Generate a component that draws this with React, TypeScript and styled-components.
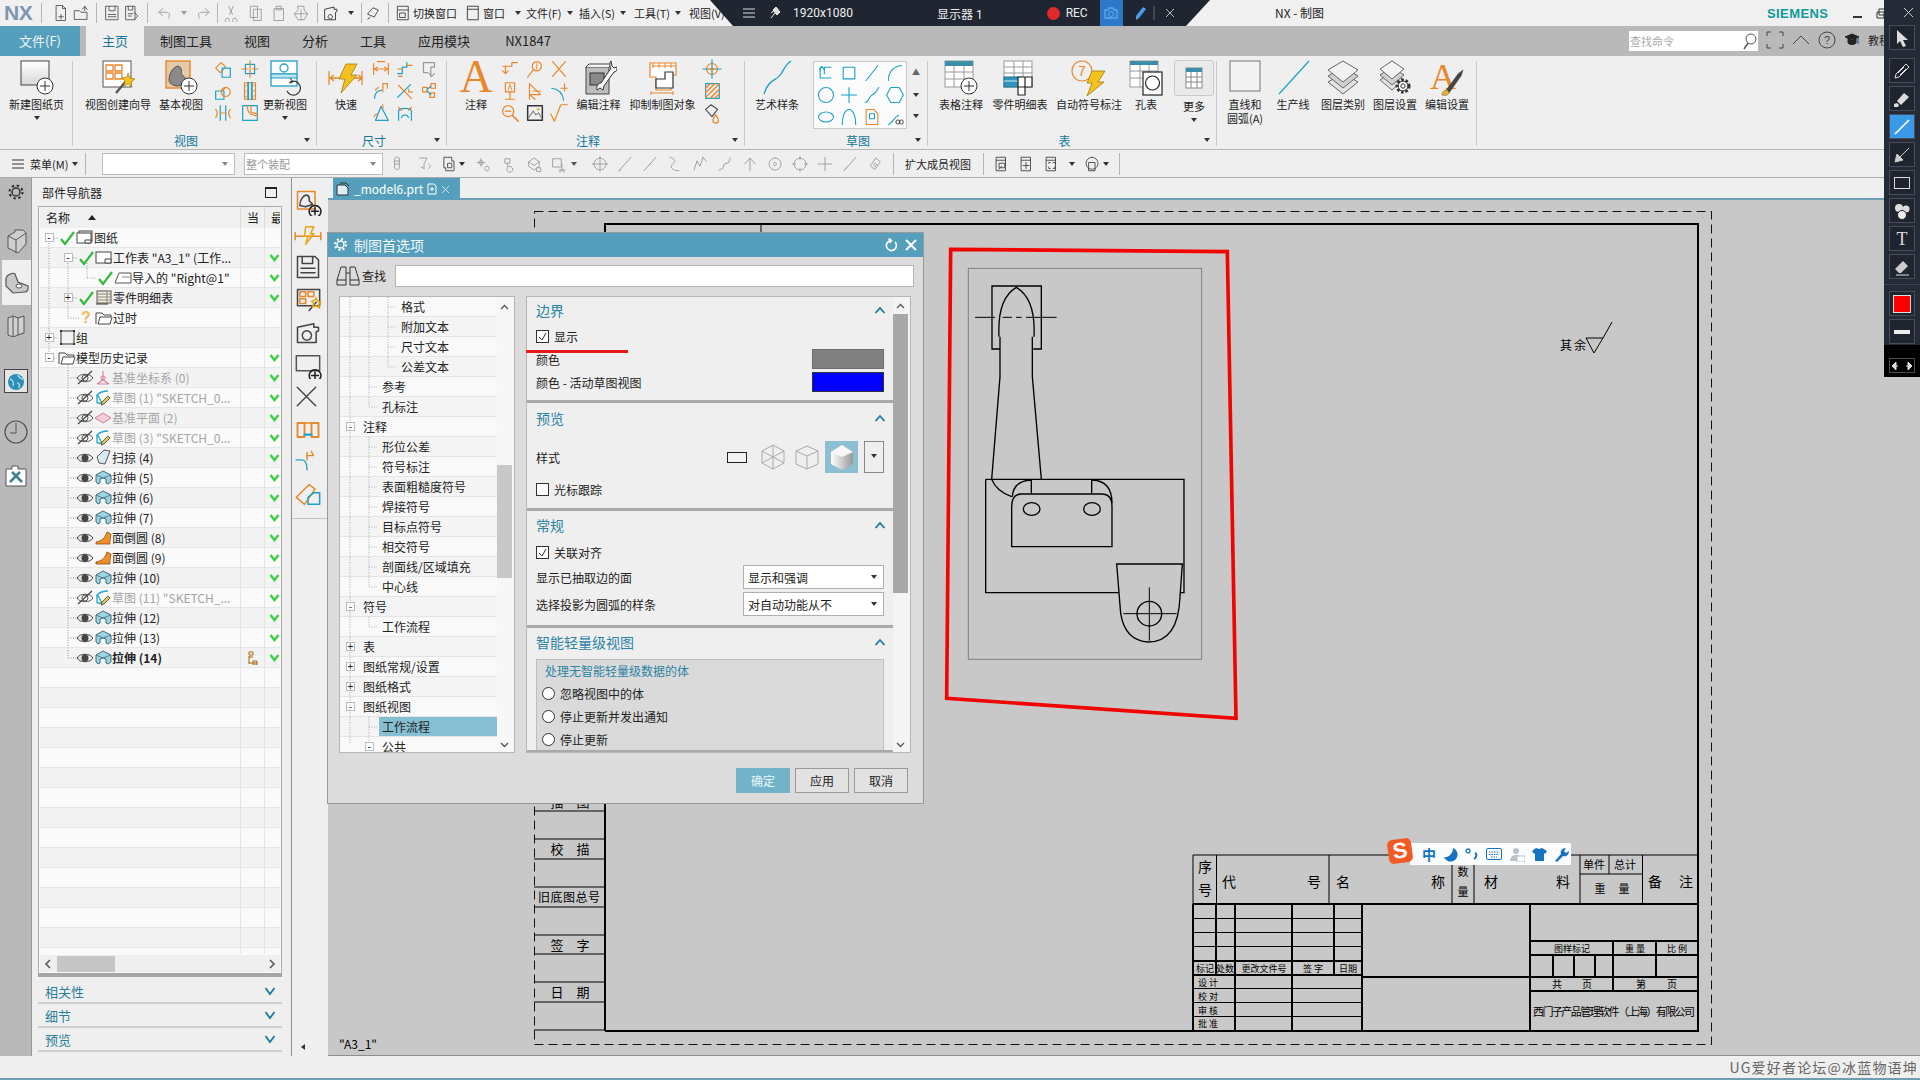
import React from "react";
import styled, { createGlobalStyle } from "styled-components";

const CJK = `"Noto Sans CJK SC", "Liberation Sans", sans-serif`;
const TEAL = "#559fbc";
const O = "#e9872b";
const B = "#1ba1c6";
const K = "#444";
const G = "#9a9a9a";

const Global = createGlobalStyle`
  html, body { margin: 0; padding: 0; width: 1920px; height: 1080px; overflow: hidden; background: #efefef; }
  body { font-family: ${CJK}; color: #222; }
  svg { display: block; }
`;

const Frame = styled.div`position: relative; width: 1920px; height: 1080px; display: flex; flex-direction: column; overflow: hidden;`;

/* generic drawing helpers */
type Part = [string, string, number?];
const Mini = ({ p, s = 22, sw = 1.3 }: { p: Part[]; s?: number; sw?: number }) => (
  <svg width={s} height={s} viewBox="0 0 24 24" fill="none" strokeLinecap="round" strokeLinejoin="round">
    {p.map(([d, c, w], i) => <path key={i} d={d} stroke={c} strokeWidth={w ?? sw} />)}
  </svg>
);

/* title bar */
const TitleBar = styled.div`position: relative; height: 26px; background: #f0f0f0; display: flex; align-items: center; flex: none;`;
const Logo = styled.div`width: 41px; padding-left: 4px; box-sizing: border-box; font: bold 21px/26px "Liberation Sans", sans-serif; color: #7d97b0; letter-spacing: -0.5px;`;
const VSep = styled.div<{ $m: number; $h?: number; $c?: string }>`width: 1px; height: ${p => p.$h ?? 20}px; background: ${p => p.$c ?? "#b5b5b5"}; margin: 0 ${p => p.$m}px; flex: none;`;
const Slot = styled.div<{ $w: number }>`width: ${p => p.$w}px; flex: none; display: flex; justify-content: center; align-items: center;`;
const Caret = styled.i<{ $c?: string }>`display: block; width: 0; height: 0; border-left: 3px solid transparent; border-right: 3px solid transparent; border-top: 4px solid ${p => p.$c ?? "#333"}; flex: none;`;
const QuickText = styled.span<{ $w: number; $ml?: number }>`font-size: 11px; line-height: 26px; width: ${p => p.$w}px; margin-left: ${p => p.$ml ?? 0}px; flex: none; white-space: nowrap; color: #222;`;
const RecBar = styled.div`position: absolute; left: 710px; top: 0; width: 500px; height: 26px; background: #1f2632; clip-path: polygon(0 0, 100% 0, 476px 100%, 23px 100%); display: flex; align-items: center; color: #eee; font: 12px "Roboto", ${CJK};`;
const RecText = styled.span<{ $ml: number }>`margin-left: ${p => p.$ml}px; white-space: nowrap;`;
const RecDot = styled.i`display: block; width: 13px; height: 13px; border-radius: 50%; background: #e02a2a; margin-left: 64px;`;
const RecCam = styled.div`width: 23px; height: 26px; background: #2d79c9; margin-left: 12px; display: flex; align-items: center; justify-content: center;`;
const WinTitle = styled.div`position: absolute; left: 1275px; top: 0; font-size: 12px; line-height: 26px; color: #222;`;
const Siemens = styled.div`position: absolute; left: 1767px; top: 1px; font: bold 13px/26px "Liberation Sans", sans-serif; color: #0d9a9a; letter-spacing: 0.4px;`;
const WinBtns = styled.div`position: absolute; left: 1852px; top: 6px; display: flex; gap: 12px; align-items: center;`;

/* tab bar */
const TabBar = styled.div`height: 30px; background: #b9b9b9; display: flex; align-items: stretch; flex: none; position: relative;`;
const FileTab = styled.div`width: 80px; background: ${TEAL}; color: #eef6fa; font-size: 13px; line-height: 30px; text-align: center; margin-right: 6px;`;
const Tab = styled.div<{ $w: number; $on?: boolean }>`width: ${p => p.$w}px; flex: none; text-align: center; font: 13px/30px ${CJK}; color: ${p => p.$on ? "#14799b" : "#222"}; background: ${p => p.$on ? "#efefef" : "transparent"};`;
const FindBox = styled.div`position: absolute; left: 1629px; top: 5px; width: 129px; height: 20px; background: #fff; font-size: 11px; line-height: 20px; color: #aaa; box-sizing: border-box; padding-left: 1px; display: flex; justify-content: space-between;`;
const TabRight = styled.div`position: absolute; left: 1766px; top: 4px; display: flex; align-items: center; gap: 8px; font-size: 11px;`;

/* ribbon */
const Ribbon = styled.div`height: 93px; background: #efefef; display: flex; flex: none; border-bottom: 1px solid #b5b5b5; box-sizing: content-box;`;
const Group = styled.div<{ $w: number; $sep?: boolean }>`
  position: relative; width: ${p => p.$w}px; flex: none; display: flex; flex-direction: column;
  ${p => p.$sep !== false ? `&::after { content: ""; position: absolute; right: 0; top: 5px; bottom: 3px; width: 1px; background: #c8c8c8; }` : ""}
`;
const GroupBody = styled.div<{ $pl?: number }>`height: 72px; padding: 4px 0 0 ${p => p.$pl ?? 0}px; display: flex; align-items: flex-start; box-sizing: content-box;`;
const GroupFoot = styled.div<{ $pl?: number; $pr?: number }>`height: 16px; display: flex; justify-content: center; align-items: center; padding: 0 ${p => p.$pr ?? 0}px 0 ${p => p.$pl ?? 0}px; font-size: 12px; color: #14799b; position: relative;`;
const FootCaret = styled(Caret)`position: absolute; right: 7px; top: 6px;`;
const Big = styled.div<{ $w: number; $ml?: number }>`width: ${p => p.$w}px; margin-left: ${p => p.$ml ?? 0}px; flex: none; display: flex; flex-direction: column; align-items: center;`;
const BigIcon = styled.div`height: 37px; display: flex; align-items: flex-start; justify-content: center;`;
const BigLabel = styled.div`font-size: 11px; line-height: 14px; text-align: center; white-space: nowrap; color: #222;`;
const MoreLabel = styled(BigLabel)`margin-top: 3px;`;
const BigCaret = styled(Caret)`margin-top: 5px;`;
const BigA = styled.span`display: block; font: 46px/34px "Liberation Serif", serif; color: ${O};`;
const EditA = styled.div`position: relative; width: 36px; height: 36px; font: 36px/34px "Liberation Serif", serif; color: ${O}; text-align: left; padding-left: 1px; box-sizing: border-box;`;
const EditBrush = styled.svg`position: absolute; left: 0; top: 0;`;
const MiniGrid = styled.div<{ $cols: number; $cw: number }>`display: grid; grid-template-columns: repeat(${p => p.$cols}, ${p => p.$cw}px); grid-auto-rows: 22px; flex: none; justify-items: center; align-items: center; margin-top: -2px;`;
const SketchBox = styled.div`display: grid; grid-template-columns: repeat(4, 23px); grid-auto-rows: 22px; background: #fbfbfb; border: 1px solid #c9c9c9; justify-items: center; align-items: center; margin: 1px 0 0 7px;`;
const SketchArrows = styled.div`display: flex; flex-direction: column; align-items: center; justify-content: space-between; width: 18px; height: 50px; margin: 8px 0 0 0; font-size: 8px; color: #666; line-height: 8px;`;
const MoreBox = styled.div`width: 38px; height: 34px; border: 1px solid #c9c9c9; border-radius: 3px; background: #eaeaea; display: flex; align-items: center; justify-content: center;`;

const BigIcons: Record<string, React.ReactNode> = {
  newSheet: <svg width="36" height="36" viewBox="0 0 36 36"><defs><linearGradient id="ns" x1="0" y1="0" x2="0" y2="1"><stop offset="0" stopColor="#fff" /><stop offset="1" stopColor="#d8d8d8" /></linearGradient></defs><rect x="2" y="1" width="28" height="24" fill="url(#ns)" stroke="#444" /><path d="M20 20h10v5H20zM25 20v5" fill="none" stroke="#888" /><circle cx="26" cy="26" r="8" fill="#fff" stroke="#333" /><path d="M21 26h10M26 21v10" stroke="#333" /></svg>,
  wizard: <svg width="36" height="36" viewBox="0 0 36 36"><rect x="3" y="1" width="28" height="26" fill="#fff" stroke="#555" /><path d="M6 5h7v6H6zM15 5h7v6h-7zM6 13h7v6H6zM15 13h7v6h-7z" fill="#fff" stroke={O} strokeWidth="1.3" /><path d="M16 33l11-13" stroke="#555" strokeWidth="2.4" /><path d="M28 13l2 5 5 1-4 3 1 5-4-3-4 2 1-5-3-3 5-1z" fill="#f4c31d" stroke="#a87a10" strokeWidth=".7" /></svg>,
  base: <svg width="36" height="36" viewBox="0 0 36 36"><rect x="3" y="1" width="24" height="27" fill="#e6c9a6" stroke={O} strokeWidth="1.4" /><path d="M6 20c0-7 4-13 9-14 4 1 4 5 3 8 3 2 6 5 6 9l-9 3c-4 0-9-2-9-6z" fill="#8a8a8a" stroke="#444" strokeWidth=".8" /><circle cx="26" cy="26" r="8" fill="#fff" stroke="#333" /><path d="M21 26h10M26 21v10" stroke="#333" /></svg>,
  update: <svg width="36" height="36" viewBox="0 0 36 36"><rect x="4" y="1" width="26" height="25" fill="#fff" stroke={B} strokeWidth="1.3" /><path d="M4 14h26" stroke={B} strokeWidth="1.3" /><path d="M4 14h26v4H4z" fill="#bfe3ee" stroke={B} /><circle cx="17" cy="8" r="4" fill="none" stroke={B} strokeWidth="1.3" /><path d="M23 22a7 7 0 1 1-3 9" fill="none" stroke="#333" strokeWidth="1.2" /><path d="M23 18l3 4-4 1" fill="none" stroke="#333" /></svg>,
  quick: <svg width="36" height="36" viewBox="0 0 36 36"><path d="M1 11v14M34 11v14M2 18h9M25 18h9M2 18l4-3M2 18l4 3M34 18l-4-3M34 18l-4 3" stroke={O} strokeWidth="1.3" fill="none" /><path d="M18 4h11l-6 11h6L13 33l4-14h-6z" fill="#f3c21c" stroke="#a17a10" strokeWidth=".8" /></svg>,
  noteA: <BigA>A</BigA>,
  editNote: <svg width="36" height="36" viewBox="0 0 36 36"><path d="M5 7h23v27H5z" fill="#bdbdbd" stroke="#444" /><path d="M5 7l3-3h23l-3 3" fill="#f4f4f4" stroke="#444" /><rect x="9" y="13" width="14" height="12" fill="#8a8a8a" stroke="#333" /><path d="M30 1c-2 3-1 5 0 7l-10 15c-3 0-5 3-4 7l3-2 3 2 1-4 10-14c3 0 3-3 3-5l-3 1-2-2z" fill="#fafafa" stroke="#333" /></svg>,
  suppress: <svg width="40" height="36" viewBox="0 0 40 36"><path d="M7 3h26v12h-5v15H13V17H7z" fill="#fff" stroke={O} strokeWidth="1.2" /><path d="M10 3v5M16 3v5M22 3v5M28 3v5M9 6h24" stroke={O} /><path d="M13 19h9v-7h8v16H13z" fill="#fff" stroke="#333" strokeWidth="1.2" /><path d="M8 33h22M8 31v4M30 31v4" stroke={O} /></svg>,
  spline: <svg width="36" height="36" viewBox="0 0 36 36"><path d="M5 34C10 18 17 22 22 14c3-5 5-10 10-13" fill="none" stroke={B} strokeWidth="1.4" /></svg>,
  tableNote: <svg width="36" height="36" viewBox="0 0 36 36"><rect x="2" y="1" width="28" height="26" fill="#fff" stroke="#999" /><rect x="2" y="1" width="28" height="5" fill="#3b8ea8" /><path d="M2 12h28M2 19h28M11 6v21M21 6v21" stroke="#999" /><circle cx="26" cy="26" r="8" fill="#fff" stroke="#333" /><path d="M21 26h10M26 21v10" stroke="#333" /></svg>,
  parts: <svg width="36" height="36" viewBox="0 0 36 36"><rect x="2" y="1" width="28" height="26" fill="#fff" stroke="#999" /><path d="M2 7h28M2 13h28M12 1v26M21 1v26" stroke="#999" /><rect x="2" y="17" width="18" height="10" fill="#2f97bd" stroke="#1c6f8f" /><path d="M2 21h18" stroke="#cfeaf3" /><path d="M16 17h14v10h-7v8h-7z" fill="#fff" stroke="#222" strokeWidth="1.2" /><path d="M23 17v10H16" stroke="#222" strokeWidth="1.2" fill="none" /></svg>,
  auto: <svg width="38" height="36" viewBox="0 0 38 36"><circle cx="12" cy="11" r="10" fill="none" stroke={O} strokeWidth="1.2" /><text x="12" y="16" textAnchor="middle" fontFamily="Liberation Sans, sans-serif" fontSize="14" fill={O}>7</text><path d="M22 11h13l-7 11h6L17 36l5-13h-5z" fill="#f3c21c" stroke="#a17a10" strokeWidth=".8" /></svg>,
  holeTable: <svg width="36" height="36" viewBox="0 0 36 36"><rect x="2" y="1" width="28" height="26" fill="#fff" stroke="#999" /><rect x="2" y="1" width="28" height="4" fill="#3b8ea8" /><path d="M2 11h28M2 18h28M12 5v22M21 5v22" stroke="#999" /><rect x="15" y="12" width="19" height="23" fill="#fff" stroke="#222" strokeWidth="1.2" /><circle cx="24.500" cy="23" r="7" fill="none" stroke="#222" strokeWidth="1.2" /></svg>,
  more: <svg width="20" height="22" viewBox="0 0 20 22"><rect x="2" y="1" width="16" height="20" fill="#fff" stroke="#888" /><rect x="2" y="1" width="16" height="4" fill="#3b8ea8" /><path d="M2 10h16M2 15h16M7 5v16M13 5v16" stroke="#888" /></svg>,
  lineArc: <svg width="36" height="36" viewBox="0 0 36 36"><rect x="3" y="1" width="30" height="30" fill="#f3f3f3" stroke="#777" /></svg>,
  prod: <svg width="36" height="36" viewBox="0 0 36 36"><path d="M4 34L34 1" stroke={B} strokeWidth="1.2" /></svg>,
  layers: <svg width="36" height="36" viewBox="0 0 36 36"><g stroke="#666" fill="#e3e3e3"><path d="M18 13l15 9-15 12-15-12z" /><path d="M18 7l15 9-15 12-15-12z" fill="#d0d0d0" /><path d="M18 1l15 9-15 12-15-12z" fill="#f2f2f2" /></g></svg>,
  layerSet: <svg width="36" height="36" viewBox="0 0 36 36"><g stroke="#666" fill="#e3e3e3"><path d="M15 12l12 8-12 10L3 20z" /><path d="M15 7l12 8-12 10L3 15z" fill="#d0d0d0" /><path d="M15 1l12 8-12 10L3 9z" fill="#f2f2f2" /></g><circle cx="26" cy="26" r="6" fill="#fff" stroke="#333" strokeWidth="3" strokeDasharray="2.5 1.8" /><circle cx="26" cy="26" r="5" fill="none" stroke="#333" /><circle cx="26" cy="26" r="2.2" fill="#fff" stroke="#333" /></svg>,
  editSet: <EditA>A<EditBrush width="36" height="36" viewBox="0 0 36 36"><path d="M16 32l13-18 5-4-2 6-12 17z" fill="#444" stroke="#333" strokeWidth=".5" /><path d="M13 35c0-3 2-5 5-5l2 2c0 3-3 4-7 3z" fill="#e0b13c" stroke="#8a6a1c" strokeWidth=".6" /></EditBrush></EditA>,
};

const m: Record<string, Part[]> = {
  proj: [["M4 11l6-6 5 5-6 6z", O], ["M11 11h9v10h-9z", B]],
  boxA: [["M7 7h10v10H7z", B], ["M12 3v18M3 12h6M15 12h6", O]],
  detail: [["M4 12h9v9H4z", B], ["M15 8a5 5 0 1 1-.1 0", O], ["M11 12l3-3", O]],
  hatch: [["M6 3h12v18H6z", O], ["M10 3v18M14 3v18", B, 2], ["M6 8l4-4M6 14l4-4M14 8l4-4M14 14l4-4M6 20l4-4M14 20l4-4", O, 1]],
  hatchBox: [["M5 4h15v16H5z", B], ["M5 9l5-5M5 14l10-10M5 19l15-15M10 20l10-10M15 20l5-5", O, 1.5]],
  brk: [["M9 4v16M15 4v16", B], ["M4 8c3 3 2 6 0 9M20 8c-3 3-2 6 0 9", O], ["M9 12h6", O]],
  sect: [["M4 4h16v16H4z", B], ["M9 4c0 8 4 11 11 11", O], ["M13 4v7l7 2", O]],
  dimH: [["M4 6v12M20 6v12M5 12h14", O], ["M5 12l3-2M5 12l3 2M19 12l-3-2M19 12l-3 2", O], ["M8 4h8", O]],
  stair: [["M4 17h5v-7h5V5", B], ["M14 8h6M9 20h-4", O], ["M4 12h4", O]],
  faded: [["M6 5h12v5h-4v10", G], ["M6 5v11h5", G], ["M12 17l3 3 3-3", G]],
  angle: [["M5 20c0-5 3-9 8-9", B], ["M14 4v9M14 4h5M19 4v5", O], ["M6 11l3-3", O]],
  slash: [["M4 19l14-14", B], ["M5 6l14 14", O], ["M16 10v3h4", O]],
  dots: [["M5 8h5v5H5zM14 4h5v5h-5zM13 14h5v5h-5z", O], ["M10 10l4-3M10 12l4 4", B]],
  tri: [["M6 20h14L12 5z", B], ["M14 7v-4M7 13l-3 3", O]],
  arc: [["M5 20V10c0-4 14-4 14 0v10", B], ["M5 6l3 3M19 6l-3 3", O], ["M8 17c2-4 6-4 8 0", B]],
  flag: [["M4 9h10V5h6", O], ["M7 16v-7", O], ["M7 17l-3-3M7 17l3-3", O]],
  balloon: [["M14 9m-5 0a5 5 0 1 0 10 0 5 5 0 1 0-10 0", O], ["M10 13L4 21", O], ["M14 6v6", O, 1]],
  cross: [["M5 4l14 16M19 4L5 20", O]],
  noteBox: [["M7 3h10v10H7z", O], ["M12 13v8M7 21h10", O], ["M10 11l2-6 2 6", O, 1]],
  triFlag: [["M6 21V4l12 12H6", O], ["M10 12h8", O], ["M6 16l6 5", O]],
  curve: [["M4 9c8 1 12 5 13 13", B], ["M14 9h7M18 4v8", O]],
  mag: [["M10 10m-6 0a6 6 0 1 0 12 0 6 6 0 1 0-12 0", O], ["M15 15l6 6", O, 1.8], ["M7 10h6", O]],
  img: [["M4 4h16v16H4z", "#333", 1.6], ["M5 17l5-7 3 4 3-2 3 5", "#888"], ["M15 8h1", "#e0b13c", 2.5]],
  rough: [["M3 13l4 8 7-18h7", O]],
  target: [["M12 12m-6 0a6 6 0 1 0 12 0 6 6 0 1 0-12 0", O], ["M12 2v20M2 12h20", B], ["M12 9v6M9 12h6", O]],
  fill: [["M5 8l6-5 7 5-6 8z", "#555"], ["M16 14c-2 3-3 4-3 6a3 3 0 0 0 6 0c0-2-1-3-3-6z", O]],
  sk1: [["M5 5v13h13", B], ["M10 13V5h8", B], ["M4 8l3-4 3 4", B]],
  sk2: [["M5 5h14v14H5z", B]],
  sk3: [["M5 21L19 3", B]],
  sk4: [["M4 21c0-10 6-17 16-18", B]],
  sk5: [["M12 12m-9 0a9 9 0 1 0 18 0 9 9 0 1 0-18 0", B]],
  sk6: [["M12 3v18M3 12h18", B]],
  sk7: [["M4 21c4 0 4-7 8-9s6-5 8-9", B]],
  sk8: [["M7 3h10l5 9-5 9H7l-5-9z", B]],
  sk9: [["M3 12a9 6 0 1 0 18 0 9 6 0 1 0-18 0", B]],
  sk10: [["M4 21c0-24 16-24 16 0", B]],
  sk11: [["M5 3h9l5 5v13H5z", O], ["M9 8h6v6H9z", B]],
  sk12: [["M4 21c5-1 6-8 12-11", B], ["M13 18a2.500 2.500 0 1 0 5 0 2.500 2.500 0 1 0-5 0M17 18a2.500 2.500 0 1 0 5 0 2.500 2.500 0 1 0-5 0", "#333", 1]],
};
const Grid = ({ cols, cw, items }: { cols: number; cw: number; items: string[] }) => (
  <MiniGrid $cols={cols} $cw={cw}>{items.map((n, i) => <Mini key={i} p={m[n]} />)}</MiniGrid>
);
const BigBtn = ({ w, ml, icon, label, drop }: { w: number; ml?: number; icon: string; label: React.ReactNode; drop?: boolean }) => (
  <Big $w={w} $ml={ml}><BigIcon>{BigIcons[icon]}</BigIcon><BigLabel>{label}</BigLabel>{drop && <BigCaret />}</Big>
);

/* toolbar row */
const ToolRow = styled.div`height: 27px; background: #efefef; border-bottom: 1px solid #a9a9a9; display: flex; align-items: center; flex: none; font-size: 11px;`;
const Combo = styled.div<{ $w: number; $ml: number }>`width: ${p => p.$w}px; height: 22px; margin-left: ${p => p.$ml}px; box-sizing: border-box; background: #fff; border: 1px solid #bdbdbd; flex: none; display: flex; align-items: center; justify-content: space-between; padding: 0 6px 0 1px; color: #999; font-size: 11px;`;

/* main */
const Main = styled.div`flex: 1; display: flex; min-height: 0;`;
const Rail = styled.div`width: 31px; background: #b9b9b9; border-right: 1px solid #999; display: flex; flex-direction: column; align-items: center; flex: none; position: relative;`;
const RailItem = styled.div<{ $h: number; $on?: boolean; $mt?: number; $pt?: number }>`height: ${p => p.$h}px; margin-top: ${p => p.$mt ?? 0}px; padding-top: ${p => p.$pt ?? 0}px; box-sizing: border-box; width: ${p => p.$on ? "29px" : "31px"}; align-self: flex-end; display: flex; align-items: center; justify-content: center; background: ${p => p.$on ? "#efefef" : "transparent"}; flex: none;`;
const Nav = styled.div`background: #efefef; border-right: 1px solid #8f8f8f; display: flex; flex-direction: column; flex: none; box-sizing: border-box; width: 260px; padding: 0 9px 0 6px;`;
const NavTitle = styled.div`height: 28px; display: flex; align-items: center; justify-content: space-between; padding: 0 5px 0 4px; font-size: 12px; color: #222; flex: none;`;
const MaxBtn = styled.i`display: block; width: 10px; height: 8px; border: 1px solid #222; border-top-width: 2px;`;
const NavBox = styled.div`height: 771px; border: 1px solid #aaa; border-bottom: 4px solid #a6a6a6; background: #fafafa; box-sizing: border-box; display: flex; flex-direction: column; position: relative; flex: none; padding: 0 1px;`;
const NavHead = styled.div`height: 21px; display: flex; font-size: 12px; background: #f0f0f0; flex: none; align-items: center;`;
const NavColName = styled.div`width: 201px; padding-left: 6px; box-sizing: border-box; display: flex; align-items: center; gap: 18px;`;
const NavCol = styled.div<{ $w: number; $pl: number }>`width: ${p => p.$w}px; flex: none; text-align: left; padding-left: ${p => p.$pl}px; box-sizing: border-box; border-left: 1px solid #dcdcdc; line-height: 21px; overflow: hidden; height: 21px; white-space: nowrap;`;
const NavRows = styled.div`height: 726px; overflow: hidden; flex: none;`;
const NavRow = styled.div<{ $odd: boolean }>`height: 20px; box-sizing: border-box; border-bottom: 1px solid #e6e6e6; background: ${p => p.$odd ? "#f3f3f3" : "#fafafa"}; display: flex;`;
const NavName = styled.div<{ $ind: number; $dim?: boolean; $b?: boolean }>`width: 201px; box-sizing: border-box; padding-left: ${p => p.$ind}px; display: flex; align-items: center; font-size: 12px; white-space: nowrap; color: ${p => p.$dim ? "#a5a5a5" : "#222"}; font-weight: ${p => p.$b ? 700 : 400}; overflow: hidden;`;
const NavCell = styled.div<{ $w: number; $pl?: number }>`width: ${p => p.$w}px; flex: none; box-sizing: border-box; padding-left: ${p => p.$pl ?? 0}px; border-left: 1px solid #e4e4e4; display: flex; align-items: center; justify-content: center;`;
const RowSlot = styled.div`width: 18px; height: 19px; flex: none; display: flex; align-items: center; justify-content: center;`;
const Exp = styled.i`display: block; width: 9px; height: 9px; box-sizing: border-box; background: #fff; border: 1px solid #bbb; position: relative; font: normal 10px/7px "Liberation Sans", sans-serif; color: #222; text-align: center;`;
const Qmark = styled.span`font: bold 16px/19px "Liberation Sans", sans-serif; color: #f2bd5c;`;
const NavScroll = styled.div`height: 17px; background: #efefef; display: flex; align-items: center; justify-content: space-between; flex: none; margin-top: 1px;`;
const NavThumbWrap = styled.div`flex: 1; height: 16px;`;
const NavThumb = styled.div`width: 58px; height: 16px; background: #c6c6c6; margin-left: 1px;`;
const ArrowBtn = styled.div`height: 17px; width: 16px; flex: none; display: flex; align-items: center; justify-content: center;`;
const Fold = styled.div<{ $mt?: number }>`height: 22px; margin-top: ${p => p.$mt ?? 0}px; border-bottom: 2px solid #cfcfcf; display: flex; align-items: center; justify-content: space-between; padding: 0 6px 0 7px; font-size: 13px; color: #2b7f9c; flex: none;`;
const Guides = styled.svg`position: absolute; left: 0; top: 0; pointer-events: none;`;

const IconCol = styled.div`width: 36px; background: #efefef; flex: none; display: flex; flex-direction: column; align-items: flex-end; padding: 10px 0 0; box-sizing: border-box; position: relative; overflow: hidden;`;
const ColItem = styled.div`height: 32.500px; width: 34px; display: flex; align-items: flex-start; flex: none;`;
const ColRule = styled.div`height: 1px; background: #c4c4c4; width: 36px; margin-top: 5px; flex: none;`;
const ColArrow = styled.i`position: absolute; left: 9px; bottom: 6px; border-right: 4px solid #333; border-top: 3px solid transparent; border-bottom: 3px solid transparent;`;

const Work = styled.div`flex: 1; display: flex; flex-direction: column; min-width: 0;`;
const DocStrip = styled.div`height: 22px; background: #efefef; border-bottom: 2px solid #6a9fb4; box-sizing: border-box; flex: none; display: flex;`;
const DocTab = styled.div`margin-left: 5px; width: 127px; height: 22px; background: ${TEAL}; color: #fff; font-size: 12px; line-height: 20px; display: flex; align-items: center; gap: 4px; padding-left: 3px; box-sizing: border-box;`;
const Canvas = styled.div`flex: 1; background: #c8c8c8; position: relative; overflow: hidden; border-bottom: 1px solid #8e8e8e;`;
const SheetSvg = styled.svg`position: absolute; left: 0; top: 0;`;
const SText = styled.text`font-family: "Noto Sans CJK SC", sans-serif; fill: #000; text-anchor: middle;`;

const Status = styled.div`height: 24px; background: #efefef; border-bottom: 2px solid #6f9db1; box-sizing: border-box; flex: none; text-align: right; padding-right: 2px; font: 14px/22px "Noto Sans CJK SC", sans-serif; color: #666; letter-spacing: 1.2px;`;

/* pen bar */
const PenBar = styled.div`position: absolute; left: 1884px; top: 0; width: 36px; height: 376px; background: #252b36; display: flex; flex-direction: column; align-items: center;`;
const PenClose = styled.div`height: 25px; width: 100%; display: flex; align-items: center; justify-content: flex-end; padding-right: 6px; box-sizing: border-box; flex: none;`;
const PenBtn = styled.div<{ $on?: boolean; $mt?: number }>`width: 26px; height: 25px; margin-top: ${p => p.$mt ?? 3}px; box-sizing: border-box; border: 1px solid #474d5a; background: ${p => p.$on ? "#3b9ae8" : "#1f242e"}; display: flex; align-items: center; justify-content: center; flex: none;`;
const PenRule = styled.div`width: 100%; height: 1px; background: #3c424e; margin-top: 5px; flex: none;`;
const PenFoot = styled.div`width: 100%; height: 32px; background: #000; margin-top: 1px; flex: none; display: flex; align-items: flex-end; justify-content: center; padding-bottom: 4px; box-sizing: border-box;`;
const PenFootBtn = styled.div`width: 26px; height: 15px; border: 1px solid #4d4d4d; box-sizing: border-box; display: flex; align-items: center; justify-content: center;`;
const Swatch = styled.i`display: block; width: 16px; height: 16px; background: #f00; border: 1px solid #ddd;`;
const PenLine = styled.i`display: block; width: 16px; height: 4px; background: #eee;`;

/* dialog */
const Dialog = styled.div`position: absolute; left: 327px; top: 232px; width: 597px; height: 572px; background: #dcdcdc; border: 1px solid #9a9a9a; box-sizing: border-box; display: flex; flex-direction: column;`;
const DlgHead = styled.div`height: 24px; background: ${TEAL}; color: #f2f8fb; font-size: 14px; line-height: 22px; display: flex; align-items: center; padding: 0 5px 1px 5px; gap: 6px; flex: none; box-sizing: border-box;`;
const DlgTitle = styled.span`flex: 1;`;
const SearchRow = styled.div`height: 39px; display: flex; align-items: flex-start; padding: 8px 0 0 8px; box-sizing: border-box; font-size: 12px; flex: none;`;
const SearchLbl = styled.span`line-height: 22px; margin: 0 9px 0 2px;`;
const SearchInput = styled.div`width: 519px; height: 22px; background: #fff; border: 1px solid #b4b4b4; box-sizing: border-box;`;
const DlgBody = styled.div`height: 457px; display: flex; padding-left: 11px; gap: 11px; flex: none;`;
const TreePane = styled.div`width: 176px; border: 1px solid #b6b6b6; background: #f7f7f7; box-sizing: border-box; display: flex; position: relative; overflow: hidden;`;
const TreeList = styled.div`width: 157px; flex: none; overflow: hidden; height: 455px;`;
const TreeRow = styled.div<{ $odd: boolean; $x: number }>`height: 20px; box-sizing: border-box; border-bottom: 1px solid #e5e5e5; background: ${p => p.$odd ? "#f4f4f4" : "#f9f9f9"}; display: flex; align-items: center; padding-left: ${p => p.$x}px; font-size: 12px; color: #222; white-space: nowrap;`;
const TreeExp = styled(Exp)`margin-right: 8px; flex: none;`;
const TreeLabel = styled.span<{ $sel?: boolean }>`${p => p.$sel ? `flex: 1; background: #86bfd2; margin-left: -3px; padding-left: 3px; line-height: 19px;` : ""}`;
const VScroll = styled.div`flex: 1; display: flex; flex-direction: column; align-items: center; position: relative;`;
const VThumb = styled.div<{ $top: number; $h: number; $c: string }>`position: absolute; left: 0; right: 2px; top: ${p => p.$top}px; height: ${p => p.$h}px; background: ${p => p.$c};`;
const VArrow = styled.div<{ $top: number }>`position: absolute; left: 3px; top: ${p => p.$top}px;`;
const OptPane = styled.div`width: 385px; border: 1px solid #b6b6b6; background: #f4f4f4; box-sizing: border-box; display: flex; overflow: hidden;`;
const OptCol = styled.div`width: 366px; flex: none; display: flex; flex-direction: column; overflow: hidden;`;
const Sec = styled.div<{ $h: number }>`height: ${p => p.$h}px; background: #efefef; border-bottom: 3px solid #a9a9a9; box-sizing: border-box; flex: none; padding: 0 9px; overflow: hidden;`;
const SecHead = styled.div<{ $h: number }>`height: ${p => p.$h}px; display: flex; justify-content: space-between; align-items: center; font-size: 14px; color: #2b84a3; margin: 0 -2px 0 0;`;
const Row = styled.div<{ $h?: number; $mt?: number }>`height: ${p => p.$h ?? 20}px; margin-top: ${p => p.$mt ?? 0}px; display: flex; align-items: center; justify-content: space-between; font-size: 12px; color: #222;`;
const RowLeft = styled.div`display: flex; align-items: center; gap: 5px;`;
const Check = styled.i`display: block; width: 13px; height: 13px; border: 1px solid #333; background: #fff; box-sizing: border-box;`;
const Color = styled.i<{ $c: string; $b: string }>`display: block; width: 72px; height: 20px; box-sizing: border-box; background: ${p => p.$c}; border: 1px solid ${p => p.$b};`;
const Select = styled.div`width: 141px; height: 24px; background: #fff; border: 1px solid #b0b0b0; box-sizing: border-box; display: flex; align-items: center; justify-content: space-between; padding: 0 6px 0 4px; font-size: 12px;`;
const Styles = styled.div`display: flex; align-items: center;`;
const StyleCell = styled.div<{ $w: number; $on?: boolean }>`width: ${p => p.$w}px; height: 32px; background: ${p => p.$on ? "#8bbfd1" : "transparent"}; display: flex; align-items: center; justify-content: center;`;
const StyleDrop = styled.div`width: 20px; height: 32px; margin-left: 6px; border: 1px solid #888; box-sizing: border-box; display: flex; justify-content: center; padding-top: 12px;`;
const GroupBox = styled.div`margin-top: 3px; height: 100px; background: #dadada; border: 1px solid #bdbdbd; box-sizing: border-box; padding: 0 5px;`;
const Legend = styled.div`height: 22px; line-height: 22px; padding-left: 3px; font-size: 12px; color: #2b84a3;`;
const RadioRow = styled.div`height: 23px; display: flex; align-items: center; gap: 5px; font-size: 12px; color: #222;`;
const Radio = styled.i`display: block; width: 13px; height: 13px; border-radius: 50%; border: 1px solid #333; background: #fff; box-sizing: border-box;`;
const DlgFoot = styled.div`display: flex; justify-content: flex-end; gap: 5px; padding: 15px 15px 0 0;`;
const DlgBtn = styled.div<{ $p?: boolean }>`width: 54px; height: 25px; box-sizing: border-box; text-align: center; font-size: 12px; line-height: 23px; background: ${p => p.$p ? "#72b3ca" : "#e2e2e2"}; color: ${p => p.$p ? "#eef7fa" : "#222"}; border: 1px solid ${p => p.$p ? "#72b3ca" : "#9a9a9a"};`;
const RedLine = styled.i`position: absolute; left: 198px; top: 117px; width: 102px; height: 3px; background: #e71a1a; display: block;`;

/* sogou */
const Sogou = styled.div`position: absolute; left: 1386px; top: 839px; width: 185px; height: 26px; display: flex; align-items: center;`;
const SogouBar = styled.div`position: absolute; left: 24px; top: 4px; right: 0; bottom: 0; background: #fbfcfd; display: flex; align-items: center; gap: 7px; padding-left: 12px; box-sizing: border-box; color: #1673c1; font-size: 14px; font-weight: 700;`;
const SogouS = styled.div`position: absolute; left: 2px; top: 0; width: 24px; height: 24px; background: #f15a22; border-radius: 5px; transform: rotate(-8deg); color: #fff; font: bold 22px/24px "Liberation Sans", sans-serif; text-align: center; z-index: 1;`;

const ChevUp = ({ c = "#167a9c" }: { c?: string }) => <svg width="12" height="10" viewBox="0 0 12 10"><path d="M1.500 8L6 3l4.500 5" fill="none" stroke={c} strokeWidth="1.800" /></svg>;
const ChevDown = () => <svg width="12" height="10" viewBox="0 0 12 10"><path d="M1.500 2L6 8l4.500-6" fill="none" stroke="#167a9c" strokeWidth="1.800" /></svg>;
const TinyUp = () => <svg width="9" height="7" viewBox="0 0 9 7"><path d="M1 5l3.500-3.500L8 5" fill="none" stroke="#555" strokeWidth="1.300" /></svg>;
const TinyDown = () => <svg width="9" height="7" viewBox="0 0 9 7"><path d="M1 2l3.500 3.500L8 2" fill="none" stroke="#555" strokeWidth="1.300" /></svg>;

/* navigator icons */
const Eye = () => <svg width="18" height="14" viewBox="0 0 18 14"><path d="M1 7c3-5 13-5 16 0-3 5-13 5-16 0z" fill="#eee" stroke="#444" strokeWidth="1" /><circle cx="9" cy="7" r="3.500" fill="#444" /></svg>;
const EyeOff = () => <svg width="18" height="15" viewBox="0 0 18 15"><path d="M1 8c3-5 13-5 16 0-3 5-13 5-16 0z" fill="none" stroke="#555" strokeWidth="1" /><circle cx="9" cy="8" r="3" fill="none" stroke="#555" /><path d="M2 14L16 1" stroke="#444" strokeWidth="1.200" /></svg>;
const Tick = () => <svg width="17" height="16" viewBox="0 0 17 16"><path d="M2 9l4 5L15 2" fill="none" stroke="#35bb3c" strokeWidth="2.200" /></svg>;
const ColTick = () => <svg width="11" height="9" viewBox="0 0 11 9"><path d="M1.500 2l4 5 4-5" fill="none" stroke="#3ccf48" strokeWidth="2.400" /></svg>;
const SheetI = () => <svg width="18" height="15" viewBox="0 0 18 15"><rect x="1" y="2" width="15" height="11" fill="#fff" stroke="#444" /><path d="M10 9h6v4h-6z" fill="#fff" stroke="#444" /></svg>;
const SheetSt = () => <svg width="18" height="15" viewBox="0 0 18 15"><rect x="3" y="1" width="13" height="10" fill="#eee" stroke="#444" /><rect x="1" y="3" width="14" height="10" fill="#fff" stroke="#444" /><path d="M9 10h6v3H9z" fill="#fff" stroke="#444" /></svg>;
const Iso = () => <svg width="18" height="13" viewBox="0 0 18 13"><path d="M1 12l4-10h12v10z" fill="#fff" stroke="#555" /><path d="M8 6h9" stroke="#888" /></svg>;
const Parts = () => <svg width="18" height="15" viewBox="0 0 18 15"><rect x="2" y="1" width="14" height="12" fill="#f2edd6" stroke="#555" /><path d="M2 4h14M2 7h14M2 10h14M12 1v12" stroke="#888" /><path d="M1 14h12" stroke="#333" /></svg>;
const Folder = () => <svg width="18" height="14" viewBox="0 0 18 14"><path d="M1 13V2h6l2 2h7v2H5L3 13h12l2-7" fill="#fff" stroke="#444" /></svg>;
const Group3 = () => <svg width="17" height="17" viewBox="0 0 17 17"><rect x="2" y="2" width="13" height="13" fill="none" stroke="#333" /><path d="M1 1h2v2H1zM14 1h2v2h-2zM1 14h2v2H1zM14 14h2v2h-2z" fill="#333" /></svg>;
const Csys = () => <svg width="16" height="16" viewBox="0 0 16 16"><path d="M8 1v9M8 10l-6 4M8 10l6 4M3 14l10 0" fill="none" stroke="#d87d96" strokeWidth="1.100" /><circle cx="8" cy="8" r="2" fill="none" stroke="#d87d96" /></svg>;
const Sk = () => <svg width="18" height="18" viewBox="0 0 18 18"><path d="M3 14V6c3-3 7-4 11-4M3 5l5 9h-5" fill="none" stroke="#25a6d0" strokeWidth="1.300" /><path d="M8 13l6-6 2 2-6 6-3 1z" fill="#e6c24f" stroke="#444" strokeWidth=".8" /></svg>;
const Plane = () => <svg width="18" height="12" viewBox="0 0 18 12"><path d="M1 6l8-5 8 5-8 5z" fill="#f6cddb" stroke="#d87d96" /></svg>;
const Sweep = () => <svg width="17" height="17" viewBox="0 0 17 17"><path d="M2 8l7-7 6 1-5 13-6-1z" fill="#d9e9f0" stroke="#555" /></svg>;
const Extrude = () => <svg width="17" height="15" viewBox="0 0 17 15"><path d="M1 5l7-4 8 4v7l-3 2-2-1v-4l-3-1-3 1v4l-2 1-2-2z" fill="#9ed3e4" stroke="#3f6c7c" /><path d="M1 5l7 3 8-3" fill="none" stroke="#3f6c7c" strokeWidth=".8" /></svg>;
const Fillet = () => <svg width="17" height="16" viewBox="0 0 17 16"><path d="M1 12c6-1 9-4 11-10l4 2c-1 6-1 8-1 10l-14 0z" fill="#ef8f2c" stroke="#8a4f10" strokeWidth=".8" /></svg>;
const Assy = () => <svg width="10" height="14" viewBox="0 0 10 14"><path d="M1 1h4v3H1zM1 5v8M1 6h4M1 12h8M5 10h4v4H5z" fill="none" stroke="#a5650f" /></svg>;

type NavItem = { ind: number; slots: React.ReactNode[]; t: string; dim?: boolean; b?: boolean; tick?: boolean; extra?: boolean };
const mk = (ic: React.ReactNode, t: string, opt: Partial<NavItem> = {}): NavItem => ({ ind: 36, slots: [<Eye />, ic], t, tick: true, ...opt });
const mkOff = (ic: React.ReactNode, t: string): NavItem => ({ ind: 36, slots: [<EyeOff />, ic], t, tick: true, dim: true });
const navRows: NavItem[] = [
  { ind: 0, slots: [<Exp>-</Exp>, <Tick />, <SheetSt />], t: "图纸" },
  { ind: 19, slots: [<Exp>-</Exp>, <Tick />, <SheetI />], t: "工作表 \"A3_1\" (工作...", tick: true },
  { ind: 38, slots: [null, <Tick />, <Iso />], t: "导入的 \"Right@1\"", tick: true },
  { ind: 19, slots: [<Exp>+</Exp>, <Tick />, <Parts />], t: "零件明细表", tick: true },
  { ind: 19, slots: [null, <Qmark>?</Qmark>, <Folder />], t: "过时" },
  { ind: 0, slots: [<Exp>+</Exp>, <Group3 />], t: " 组" },
  { ind: 0, slots: [<Exp>-</Exp>, <Folder />], t: " 模型历史记录", tick: true },
  mkOff(<Csys />, "基准坐标系 (0)"),
  mkOff(<Sk />, "草图 (1) \"SKETCH_0..."),
  mkOff(<Plane />, "基准平面 (2)"),
  mkOff(<Sk />, "草图 (3) \"SKETCH_0..."),
  mk(<Sweep />, "扫掠 (4)"),
  mk(<Extrude />, "拉伸 (5)"),
  mk(<Extrude />, "拉伸 (6)"),
  mk(<Extrude />, "拉伸 (7)"),
  mk(<Fillet />, "面倒圆 (8)"),
  mk(<Fillet />, "面倒圆 (9)"),
  mk(<Extrude />, "拉伸 (10)"),
  mkOff(<Sk />, "草图 (11) \"SKETCH_..."),
  mk(<Extrude />, "拉伸 (12)"),
  mk(<Extrude />, "拉伸 (13)"),
  { ...mk(<Extrude />, "拉伸 (14)"), b: true, extra: true },
];

type DItem = { t: string; x: number; exp?: string; sel?: boolean };
const dlgRows: DItem[] = [
  { t: "格式", x: 61 }, { t: "附加文本", x: 61 }, { t: "尺寸文本", x: 61 }, { t: "公差文本", x: 61 },
  { t: "参考", x: 42 }, { t: "孔标注", x: 42 },
  { t: "注释", x: 6, exp: "-" },
  { t: "形位公差", x: 42 }, { t: "符号标注", x: 42 }, { t: "表面粗糙度符号", x: 42 }, { t: "焊接符号", x: 42 }, { t: "目标点符号", x: 42 }, { t: "相交符号", x: 42 }, { t: "剖面线/区域填充", x: 42 }, { t: "中心线", x: 42 },
  { t: "符号", x: 6, exp: "-" }, { t: "工作流程", x: 42 },
  { t: "表", x: 6, exp: "+" }, { t: "图纸常规/设置", x: 6, exp: "+" }, { t: "图纸格式", x: 6, exp: "+" }, { t: "图纸视图", x: 6, exp: "-" },
  { t: "工作流程", x: 42, sel: true },
  { t: "公共", x: 25, exp: "-" },
];

const Icon3 = ({ k }: { k: string }) => {
  const c = "#a9a9a9";
  if (k === "rect") return <svg width="20" height="11"><rect x=".5" y=".5" width="19" height="10" fill="#f2f2f2" stroke="#222" /></svg>;
  if (k === "wire") return <svg width="26" height="28" viewBox="0 0 26 28"><path d="M13 2l11 6v12l-11 6L2 20V8zM2 8l11 6 11-6M13 14v12M2 20l11-6 11 6M13 2v12" fill="none" stroke={c} /></svg>;
  if (k === "hid") return <svg width="26" height="28" viewBox="0 0 26 28"><path d="M13 3l11 5v13l-11 5-11-5V8zM2 8l11 5 11-5M13 13v13" fill="none" stroke={c} /></svg>;
  return <svg width="26" height="28" viewBox="0 0 26 28"><defs><linearGradient id="shd" x1="0" y1="0" x2="1" y2="0"><stop offset="0" stopColor="#fff" /><stop offset="1" stopColor="#999" /></linearGradient></defs><path d="M2 9l11-7 11 7v12l-11 6-11-6z" fill="url(#shd)" /><path d="M2 9l11-7 11 7-11 5z" fill="#f7f7f7" /></svg>;
};

const SheetDrawing = () => {
  const tx = (x: number, y: number, s: string, z = 12) => <SText key={`${x}-${y}-${s}`} x={x} y={y + z * 0.4} fontSize={z}>{s}</SText>;
  const thick = { stroke: "#000", strokeWidth: 2, fill: "none" };
  const thin = { stroke: "#000", strokeWidth: 1, fill: "none" };
  return (
    <SheetSvg width="1592" height="856" viewBox="328 200 1592 856">
      <rect x="534.500" y="211.500" width="1177" height="833" fill="none" stroke="#111" strokeDasharray="9 5" />
      <path d="M605 1031V224H1698V1031H605" {...thick} />
      <path d="M761 224v12" {...thin} />
      {/* left strip */}
      <path d="M534 811h71M534 839h71M534 859h71M534 887h71M534 907h71M534 935h71M534 954h71M534 982h71M534 1002h71M534 1030h71" {...thin} />
      {tx(557, 802, "描", 13)}{tx(583, 802, "图", 13)}
      {tx(557, 849, "校", 13)}{tx(583, 849, "描", 13)}
      {["旧", "底", "图", "总", "号"].map((s, i) => tx(544 + i * 12.500, 897, s, 12))}
      {tx(557, 945, "签", 13)}{tx(583, 945, "字", 13)}
      {tx(557, 992, "日", 13)}{tx(583, 992, "期", 13)}
      <path d="M1193 855H1698M1193 855V904M1216.500 855V904M1329 855V904M1452 855V904M1474 855V904M1580 855V904M1642.500 855V904M1580 874h62.500M1609 855v19" {...thin} />
      {tx(1205, 866, "序", 14)}{tx(1205, 889, "号", 14)}
      {tx(1229, 881, "代", 14)}{tx(1314, 881, "号", 14)}
      {tx(1343, 881, "名", 14)}{tx(1438, 881, "称", 14)}
      {tx(1463, 872, "数", 11)}{tx(1463, 892, "量", 11)}
      {tx(1491, 881, "材", 14)}{tx(1563, 881, "料", 14)}
      {tx(1594, 865, "单件", 11)}{tx(1625, 865, "总计", 11)}
      {tx(1600, 889, "重", 11)}{tx(1624, 889, "量", 11)}
      {tx(1655, 881, "备", 14)}{tx(1686, 881, "注", 14)}
      {/* thick title block */}
      <path d="M1193 904H1698M1193 904V1031M1362 904V1031M1530 904V1031M1698 904V1031M1216 904V975M1235 904V1031M1292 904V1031M1334 904V975" {...thick} />
      <path d="M1193 918.500h169M1193 932.500h169M1193 946.500h169M1193 988.500h169M1193 1002.500h169M1193 1016.500h169" {...thin} />
      <path d="M1193 961h169M1193 975h169M1362 977h168M1530 941h168M1530 955h168M1530 977h168M1530 991h168M1613 941V991M1656 941V977M1553 955v22M1574 955v22M1595 955v22" {...thick} />
      {tx(1205, 968, "标记", 9)}{tx(1225, 968, "处数", 9)}{tx(1264, 968, "更改文件号", 9)}{tx(1313, 968, "签 字", 9)}{tx(1348, 968, "日期", 9)}
      {tx(1208, 982, "设 计", 9)}{tx(1208, 996, "校 对", 9)}{tx(1208, 1010, "审 核", 9)}{tx(1208, 1023, "批 准", 9)}
      {tx(1572, 948, "图样标记", 9)}{tx(1635, 948, "重  量", 9)}{tx(1677, 948, "比  例", 9)}
      {tx(1557, 984, "共", 10)}{tx(1587, 984, "页", 10)}{tx(1641, 984, "第", 10)}{tx(1672, 984, "页", 10)}
      <SText x="1614" y="1016" fontSize="11" textLength="162" lengthAdjust="spacing">西门子产品管理软件（上海）有限公司</SText>
      {/* rough symbol */}
      {tx(1566, 345, "其", 12)}{tx(1580, 345, "余", 12)}
      <path d="M1586 338h17l-9 15zM1603 338l9-16" {...thin} />
      {/* view */}
      <g transform="translate(930 230) scale(.33333)" fill="none" stroke="#000" strokeWidth="4">
        <rect x="115" y="115" width="700" height="1173" stroke="#808080" strokeWidth="3" />
        <path d="M62 58L892 65L918 1465L50 1405Z" stroke="#f00400" strokeWidth="11" />
        <path d="M210 357H186V168H334V357H310" />
        <path d="M207 320C203 240 220 195 259 172C298 195 316 240 312 320" />
        <path d="M210 320V440L185 748M307 320V440L334 748" />
        <path d="M135 262H195M218 262H246M258 262H275M288 262H380" strokeWidth="3" />
        <path d="M167 748H762V1088H750M167 748V1088H566" />
        <path d="M245 950V830Q245 792 275 792H515Q546 792 546 830V950Z" />
        <path d="M247 800Q250 752 305 750M486 750Q546 752 546 820M304 750V790M485 750V790M185 748Q200 785 245 800" />
        <ellipse cx="305" cy="837" rx="25" ry="19" /><ellipse cx="486" cy="837" rx="25" ry="19" />
        <path d="M560 1002H757L750 1100Q745 1235 655 1236Q585 1232 572 1150Z" />
        <circle cx="658" cy="1151" r="37" />
        <path d="M580 1151H740M658 1072V1232" strokeWidth="3" />
      </g>
      <SText x="358" y="1049" fontSize="12">"A3_1"</SText>
    </SheetSvg>
  );
};

export default function App() {
  const q = (d: string, c = "#555") => <Mini p={[[d, c]]} s={18} sw={1.2} />;
  return (
    <Frame>
      <Global />
      <TitleBar>
        <Logo>NX</Logo>
        <VSep $m={0} />
        <Slot $w={9} />
        <Slot $w={20}>{q("M6 2h8l4 4v16H6zM14 2v4h4M9 17h6M12 14v6")}</Slot>
        <Slot $w={20}>{q("M3 20V9h7l2 2h8v9zM14 7l3-4 3 4M17 3v6")}</Slot>
        <VSep $m={5} />
        <Slot $w={20}>{q("M4 3h16v18H4zM8 3v6h8V3M7 14h10M7 17h10")}</Slot>
        <Slot $w={20}>{q("M4 3h12v18H4zM7 3v5h6V3M7 13h6M7 16h4M15 11l5 5-5 5")}</Slot>
        <VSep $m={5} />
        <Slot $w={24}>{q("M9 6L4 11l5 5M4 11h10c4 0 5 4 3 8", G)}</Slot>
        <Slot $w={13}><Caret $c={G} /></Slot>
        <Slot $w={26}>{q("M15 6l5 5-5 5M20 11H10c-4 0-5 4-3 8", G)}</Slot>
        <VSep $m={1} />
        <Slot $w={24}>{q("M9 3l5 11M15 3L10 14M7 19a3 3 0 1 0 .1 0M17 19a3 3 0 1 0 .1 0", G)}</Slot>
        <Slot $w={26}>{q("M5 3h9v15H5zM9 7h10v15H9z", G)}</Slot>
        <Slot $w={20}>{q("M6 6h12v16H6zM9 3h6v5H9z", G)}</Slot>
        <Slot $w={24}>{q("M8 3h8v5l5 5-5 8H8l-5-8 5-5zM4 13h16M12 8v13", G)}</Slot>
        <VSep $m={4} />
        <Slot $w={18}>{q("M4 7l12-3v3h4v3l-2 1v10H4zM11 14a3 3 0 1 0 .1 0", "#333")}</Slot>
        <Slot $w={21}><Caret /></Slot>
        <VSep $m={0} />
        <Slot $w={22}>{q("M5 13l7-8 7 3-5 9zM8 18l-3 2", "#444")}</Slot>
        <VSep $m={4} />
        <Slot $w={20}>{q("M5 3h14v18H5zM5 8h14M8 12h7v6H8z", "#444")}</Slot>
        <QuickText $w={50}>切换窗口</QuickText>
        <Slot $w={20}>{q("M5 3h14v18H5zM5 7h14", "#333")}</Slot>
        <QuickText $w={32}>窗口</QuickText>
        <Caret />
        <Slot $w={5} />
        <QuickText $w={41}>文件(F)</QuickText>
        <Caret />
        <Slot $w={6} />
        <QuickText $w={41}>插入(S)</QuickText>
        <Caret />
        <Slot $w={8} />
        <QuickText $w={41}>工具(T)</QuickText>
        <Caret />
        <Slot $w={8} />
        <QuickText $w={30}>视图(V)</QuickText>
        <WinTitle>NX - 制图</WinTitle>
        <Siemens>SIEMENS</Siemens>
        <WinBtns>
          <svg width="12" height="12"><path d="M1 10h9" stroke="#333" strokeWidth="2" /></svg>
          <svg width="12" height="14"><path d="M3 3h7v6H3zM1 6h7v6H1z" fill="#f0f0f0" stroke="#333" /></svg>
        </WinBtns>
        <RecBar>
          <RecText $ml={32}><svg width="14" height="12"><path d="M1 2h12M1 6h12M1 10h12" stroke="#ddd" /></svg></RecText>
          <RecText $ml={12}><svg width="14" height="16" viewBox="0 0 14 16"><path d="M3 13l4-5M5 5l4 5 3-3-4-5zM3 8l4-3" stroke="#eee" fill="#ddd" /></svg></RecText>
          <RecText $ml={11}>1920x1080</RecText>
          <RecText $ml={84}>显示器 1</RecText>
          <RecDot />
          <RecText $ml={6}>REC</RecText>
          <RecCam><svg width="16" height="14" viewBox="0 0 16 14"><path d="M2 4h3l1-2h4l1 2h3v8H2z" fill="none" stroke="#62a8ec" strokeWidth="1.300" /><circle cx="8" cy="8" r="2.500" fill="none" stroke="#62a8ec" /></svg></RecCam>
          <RecText $ml={10}><svg width="14" height="16" viewBox="0 0 14 16"><path d="M3 11l7-9 3 2-7 9-3 2z" fill="#4a9de8" /></svg></RecText>
          <RecText $ml={6}><svg width="3" height="14"><path d="M1 0v14" stroke="#667" /></svg></RecText>
          <RecText $ml={9}><svg width="10" height="10"><path d="M1 1l8 8M9 1L1 9" stroke="#bbb" /></svg></RecText>
        </RecBar>
      </TitleBar>

      <TabBar>
        <FileTab>文件(F)</FileTab>
        <Tab $w={58} $on>主页</Tab>
        <Tab $w={84}>制图工具</Tab>
        <Tab $w={58}>视图</Tab>
        <Tab $w={58}>分析</Tab>
        <Tab $w={58}>工具</Tab>
        <Tab $w={84}>应用模块</Tab>
        <Tab $w={84}>NX1847</Tab>
        <FindBox>查找命令<svg width="16" height="20" viewBox="0 0 16 20"><circle cx="9" cy="8" r="5" fill="none" stroke="#555" /><path d="M6 12l-4 6" stroke="#555" strokeWidth="1.500" /></svg></FindBox>
        <TabRight>
          <svg width="18" height="18"><path d="M1 5V1h4M13 1h4v4M17 13v4h-4M5 17H1v-4" fill="none" stroke="#444" /></svg>
          <svg width="18" height="18"><path d="M1 13l8-8 8 8" fill="none" stroke="#444" /></svg>
          <svg width="18" height="20" viewBox="0 0 18 20"><circle cx="9" cy="10" r="8" fill="none" stroke="#444" /><text x="9" y="14" textAnchor="middle" fontSize="11" fontFamily="Liberation Sans" fill="#444">?</text></svg>
          <svg width="16" height="14" viewBox="0 0 16 14"><path d="M1 4l7-3 7 3-7 3zM4 6v4c2 2 6 2 8 0V6" fill="#222" stroke="#222" /><path d="M14 4v7" stroke="#14a" /></svg>
          <span>教程</span>
        </TabRight>
      </TabBar>

      <Ribbon>
        <Group $w={73}>
          <GroupBody><BigBtn w={73} icon="newSheet" label="新建图纸页" drop /></GroupBody>
        </Group>
        <Group $w={244}>
          <GroupBody $pl={10}>
            <BigBtn w={70} icon="wizard" label="视图创建向导" />
            <BigBtn w={56} icon="base" label="基本视图" />
            <Grid cols={2} cw={27} items={["proj", "boxA", "detail", "hatch", "brk", "sect"]} />
            <BigBtn w={44} icon="update" label="更新视图" drop />
          </GroupBody>
          <GroupFoot $pr={18}>视图<FootCaret /></GroupFoot>
        </Group>
        <Group $w={130}>
          <GroupBody $pl={6}>
            <BigBtn w={46} icon="quick" label="快速" />
            <Grid cols={3} cw={24} items={["dimH", "stair", "faded", "angle", "slash", "dots", "tri", "arc"]} />
          </GroupBody>
          <GroupFoot $pr={16}>尺寸<FootCaret /></GroupFoot>
        </Group>
        <Group $w={298}>
          <GroupBody $pl={7}>
            <BigBtn w={44} icon="noteA" label="注释" />
            <Grid cols={3} cw={24.5} items={["flag", "balloon", "cross", "noteBox", "triFlag", "curve", "mag", "img", "rough"]} />
            <BigBtn w={54} icon="editNote" label="编辑注释" />
            <BigBtn w={74} icon="suppress" label="抑制制图对象" />
            <Grid cols={1} cw={24} items={["target", "hatchBox", "fill"]} />
          </GroupBody>
          <GroupFoot $pr={16}>注释<FootCaret /></GroupFoot>
        </Group>
        <Group $w={183}>
          <GroupBody $pl={3}>
            <BigBtn w={58} icon="spline" label="艺术样条" />
            <SketchBox>
              {["sk1", "sk2", "sk3", "sk4", "sk5", "sk6", "sk7", "sk8", "sk9", "sk10", "sk11", "sk12"].map(n => <Mini key={n} p={m[n]} s={20} />)}
            </SketchBox>
            <SketchArrows>▲<Caret /><Caret /></SketchArrows>
          </GroupBody>
          <GroupFoot $pl={43}>草图<FootCaret /></GroupFoot>
        </Group>
        <Group $w={289}>
          <GroupBody $pl={4}>
            <BigBtn w={58} icon="tableNote" label="表格注释" />
            <BigBtn w={60} icon="parts" label="零件明细表" />
            <BigBtn w={78} icon="auto" label="自动符号标注" />
            <BigBtn w={36} icon="holeTable" label="孔表" />
            <Big $w={40} $ml={10}><MoreBox>{BigIcons.more}</MoreBox><MoreLabel>更多</MoreLabel><BigCaret /></Big>
          </GroupBody>
          <GroupFoot $pr={16}>表<FootCaret /></GroupFoot>
        </Group>
        <Group $w={260}>
          <GroupBody $pl={3}>
            <BigBtn w={50} icon="lineArc" label={<>直线和<br />圆弧(A)</>} />
            <BigBtn w={46} icon="prod" label="生产线" />
            <BigBtn w={54} icon="layers" label="图层类别" />
            <BigBtn w={50} icon="layerSet" label="图层设置" />
            <BigBtn w={54} icon="editSet" label="编辑设置" />
          </GroupBody>
        </Group>
      </Ribbon>

      <ToolRow>
        <Slot $w={12} />
        <svg width="12" height="10"><path d="M0 1h12M0 5h12M0 9h12" stroke="#333" /></svg>
        <QuickText $w={42} $ml={6}>菜单(M)</QuickText>
        <Caret />
        <VSep $m={7} $h={22} />
        <Combo $w={133} $ml={9}><span /><Caret $c="#888" /></Combo>
        <Combo $w={139} $ml={9}>整个装配<Caret $c="#888" /></Combo>
        {[
          "M9 4a4 4 0 0 1 6 0v14a4 4 0 0 1-6 0zM9 8h6M9 12h6",
          "M6 4h10l-4 8v6M12 18l-4-2M18 12l3 3-3 3",
          "M7 3h10v5h3v13H9v-4H7zM12 11h5v6h-5z",
        ].map((d, i) => <Slot key={i} $w={i === 2 ? 22 : 27}>{q(d, i === 2 ? "#444" : G)}</Slot>)}
        <Caret /><Slot $w={6} />
        {[
          "M8 7a3 3 0 1 0 .1 0M16 15a3 3 0 1 0 .1 0M3 10h10M8 5v10",
          "M7 5h6v6H7zM13 15a4 4 0 1 0 .1 0M10 11v4",
          "M5 9l7-5 7 5v6l-7 5-7-5zM5 9l7 5 7-5M16 17h5v5h-5z",
          "M4 5h11v11H4zM16 20a3 3 0 1 0 .1 0M16 12v8M12 20h8",
        ].map((d, i) => <Slot key={i} $w={25}>{q(d, G)}</Slot>)}
        <Caret $c="#555" /><Slot $w={10} />
        {[
          "M12 4a8 8 0 1 0 .1 0M12 2v20M2 12h20",
          "M4 21L20 3M4 21l2-1",
          "M4 21L20 3M10 14l4-4",
          "M5 3c8 2 8 6 4 9s-2 9 8 9",
          "M4 20l4-12 4 7 4-12 4 5M8 8v1M16 3v1",
          "M4 20l5-2 2-6 6-2 2-6",
          "M12 21V5M5 12l7-8 7 8",
          "M12 4a8 8 0 1 0 .1 0M12 10a2 2 0 1 0 .1 0",
          "M12 4a8 8 0 1 0 .1 0M12 2v4M12 18v4M2 12h4M18 12h4",
          "M12 3v18M3 12h18",
          "M4 21L20 3M8 16l-3 3",
          "M6 14l7-10 6 5-7 10zM12 11a2 2 0 1 0 .1 0",
        ].map((d, i) => <Slot key={i} $w={25}>{q(d, G)}</Slot>)}
        <VSep $m={6} $h={22} />
        <QuickText $w={74} $ml={5}>扩大成员视图</QuickText>
        <VSep $m={4} $h={22} />
        {["M6 3h12v18H6zM6 7h12M10 11h7v6h-7zM9 19l4-4", "M6 3h12v18H6zM6 7h12M12 10v8M8 14h8", "M6 3h12v18H6zM6 7h12M9 11v-1h2M15 10h2v1M9 16v2h2M15 18h2v-2"].map((d, i) => <Slot key={i} $w={25}>{q(d, "#444")}</Slot>)}
        <Slot $w={6} /><Caret /><Slot $w={6} />
        <Slot $w={22}>{q("M12 3a8 8 0 1 0 .1 0M8 10h8v11H8z", "#444")}</Slot>
        <Caret /><Slot $w={10} />
        <VSep $m={0} $h={22} />
      </ToolRow>

      <Main>
        <Rail>
          <RailItem $h={27}><svg width="18" height="18" viewBox="0 0 18 18"><circle cx="9" cy="9" r="4" fill="none" stroke="#333" strokeWidth="1.500" /><circle cx="9" cy="9" r="6.500" fill="none" stroke="#333" strokeWidth="2" strokeDasharray="2.500 2.600" /></svg></RailItem>
          <RailItem $h={55} $pt={16}><svg width="22" height="28" viewBox="0 0 22 28"><path d="M3 9l7-4v-2l8 0 3 3v11l-8 9-10-5z" fill="#cfcfcf" stroke="#555" /><path d="M3 9l8 4 10-7M11 13v13" fill="none" stroke="#555" /></svg></RailItem>
          <RailItem $h={45} $on><svg width="26" height="24" viewBox="0 0 26 24"><path d="M2 15V8c0-4 7-7 9-5l3 8 10 4c1 3-1 6-3 6L9 22z" fill="#c9c9c9" stroke="#555" strokeWidth="1.200" /><ellipse cx="15" cy="15" rx="3" ry="2" fill="#fff" stroke="#555" /></svg></RailItem>
          <RailItem $h={40}><svg width="18" height="24" viewBox="0 0 18 24"><path d="M1 5l5-2 5 2v17l-5 2-5-2zM6 3v21M11 5l6-2v17l-6 2" fill="#cfcfcf" stroke="#555" /></svg></RailItem>
          <RailItem $h={35} $mt={18}><svg width="24" height="24" viewBox="0 0 24 24"><rect x=".5" y=".5" width="23" height="23" fill="#e6e6e6" stroke="#444" /><circle cx="12" cy="13" r="8" fill="#2d8fb5" /><path d="M6 10c3 1 4 4 3 7M14 6c1 3 4 4 5 4M13 14c2 0 3 2 2 5" stroke="#9edcef" fill="none" strokeWidth="1.500" /></svg></RailItem>
          <RailItem $h={68}><svg width="24" height="24" viewBox="0 0 24 24"><circle cx="12" cy="12" r="11" fill="none" stroke="#555" strokeWidth="1.200" /><path d="M12 3v10H6" fill="none" stroke="#555" /></svg></RailItem>
          <RailItem $h={20}><svg width="22" height="22" viewBox="0 0 22 22"><path d="M1 4h6V1h6v3h8v17H1z" fill="#fff" stroke="#555" /><path d="M5 17L15 7M7 7l10 10" stroke="#3e7f90" strokeWidth="2.500" /></svg></RailItem>
        </Rail>

        <Nav>
          <NavTitle>部件导航器<MaxBtn /></NavTitle>
          <NavBox>
            <NavHead>
              <NavColName>名称<svg width="8" height="5"><path d="M0 5l4-5 4 5z" fill="#222" /></svg></NavColName>
              <NavCol $w={24} $pl={6}>当</NavCol>
              <NavCol $w={16} $pl={6}>最</NavCol>
            </NavHead>
            <NavRows>
              {Array.from({ length: 37 }).map((_, i) => {
                const r = navRows[i];
                return (
                  <NavRow key={i} $odd={i % 2 === 1}>
                    <NavName $ind={r?.ind ?? 0} $dim={r?.dim} $b={r?.b}>
                      {r?.slots.map((s, j) => <RowSlot key={j}>{s}</RowSlot>)}
                      {r && <span>{r.t}</span>}
                    </NavName>
                    <NavCell $w={24}>{r?.extra && <Assy />}</NavCell>
                    <NavCell $w={16} $pl={4}>{r?.tick && <ColTick />}</NavCell>
                  </NavRow>
                );
              })}
            </NavRows>
            <NavScroll>
              <ArrowBtn><svg width="8" height="10"><path d="M6 1L2 5l4 4" fill="none" stroke="#555" strokeWidth="1.500" /></svg></ArrowBtn>
              <NavThumbWrap><NavThumb /></NavThumbWrap>
              <ArrowBtn><svg width="8" height="10"><path d="M2 1l4 4-4 4" fill="none" stroke="#555" strokeWidth="1.500" /></svg></ArrowBtn>
            </NavScroll>
            <Guides width="240" height="460">
              <path d="M10 36V126M10 136V146M29 56V86M29 96V111M48 56V71M29 158V451" fill="none" stroke="#999" strokeDasharray="1 1.500" />
              <path d="M15 31h4M34 51h4M48 71h10M34 91h4M29 111h12M15 131h3M15 151h3M29 171h15M29 191h15M29 211h15M29 231h15M29 251h15M29 271h15M29 291h15M29 311h15M29 331h15M29 351h15M29 371h15M29 391h15M29 411h15M29 431h15M29 451h15" fill="none" stroke="#999" strokeDasharray="1 1.500" />
            </Guides>
          </NavBox>
          <Fold $mt={3}>相关性<ChevDown /></Fold>
          <Fold>细节<ChevDown /></Fold>
          <Fold>预览<ChevDown /></Fold>
        </Nav>

        <IconCol>
          {[
            <Mini p={[["M3 3h15v15H3z", O], ["M5 15c0-5 3-9 6-9 3 1 2 3 2 5l3 3-6 2z", K], ["M18 15a5 5 0 1 0 .1 0M15 20h6M18 17v6", "#222"]]} s={28} />,
            <Mini p={[["M1 10v6M23 10v6M2 13h20", O], ["M10 5h7l-3 6h3l-7 9 2-7h-3z", "#e2a814"]]} s={28} />,
            <Mini p={[["M3 3h15l3 3v15H3zM7 3v6h9V3M6 13h12M6 17h12", K]]} s={28} />,
            <Mini p={[["M3 3h19v14H3z", K], ["M5 5h5v4H5zM12 5h5v4h-5zM5 11h5v4H5z", O], ["M13 21l6-7", K], ["M19 10l1 3 3 1-2 2 1 3-3-2-3 1 1-3-2-2 3-1z", "#e2a814"]]} s={28} />,
            <Mini p={[["M3 8l14-3v3h4v3l-2 1v9H3zM11 11a4 4 0 1 0 .1 0", "#444"]]} s={28} />,
            <Mini p={[["M2 4h20v13H2z", "#555"], ["M18 16a5 5 0 1 0 .1 0M15 21h6M18 18v6", "#222"]]} s={28} />,
            <Mini p={[["M3 4l17 17M20 4L3 21", "#444"]]} s={26} />,
            <Mini p={[["M3 6h6v12H3zM15 6h6v12h-6z", O, 1.6], ["M9 16h6", B, 2], ["M9 6h6", O]]} s={28} />,
            <Mini p={[["M2 11h5c4 0 5 3 5 9", B], ["M12 11V4M12 7h6M16 3l2 4", O]]} s={26} />,
            <Mini p={[["M2 14L13 3l5 4-9 13z", O], ["M12 14l5-4 5 0v10H12z", B]]} s={28} />,
          ].map((ic, i) => <ColItem key={i}>{ic}</ColItem>)}
          <ColRule />
          <ColArrow />
        </IconCol>

        <Work>
          <DocStrip>
            <DocTab>
              <svg width="14" height="14" viewBox="0 0 14 14"><path d="M1 3h8l3 3v7H1z" fill="#dfeef4" stroke="#333" /><path d="M4 1h6l3 3" fill="none" stroke="#333" /></svg>
              _model6.prt
              <svg width="10" height="12" viewBox="0 0 10 12"><path d="M1 1h6l2 2v8H1zM3 6h4M5 4v4" fill="none" stroke="#fff" /></svg>
              <svg width="9" height="9"><path d="M1 1l7 7M8 1L1 8" stroke="#cfe6ef" /></svg>
            </DocTab>
          </DocStrip>
          <Canvas><SheetDrawing /></Canvas>
        </Work>
      </Main>
      <Status>UG爱好者论坛@冰蓝物语坤</Status>

      <PenBar>
        <PenClose><svg width="11" height="11"><path d="M1 1l9 9M10 1L1 10" stroke="#ccc" /></svg></PenClose>
        <PenBtn $mt={0}><svg width="14" height="18" viewBox="0 0 14 18"><path d="M2 1l11 10H8l3 6-3 1-3-6-3 3z" fill="#ddd" /></svg></PenBtn>
        <PenBtn $mt={8}><svg width="18" height="18" viewBox="0 0 18 18"><path d="M2 16l1-4L13 2l3 3L6 15zM5 11l6-6M7 13l6-6" fill="none" stroke="#ddd" /></svg></PenBtn>
        <PenBtn><svg width="18" height="18" viewBox="0 0 18 18"><path d="M1 14l3-1 2 2-1 2H1zM4 11l7-8 5 4-8 8z" fill="#ddd" /></svg></PenBtn>
        <PenBtn $on><svg width="18" height="18" viewBox="0 0 18 18"><path d="M2 16L16 2" stroke="#fff" strokeWidth="1.600" /></svg></PenBtn>
        <PenBtn><svg width="18" height="18" viewBox="0 0 18 18"><path d="M16 2L7 11M2 16l2-8 6 6z" fill="#ccc" stroke="#ccc" /></svg></PenBtn>
        <PenBtn><svg width="16" height="12"><rect x=".5" y=".5" width="15" height="11" fill="none" stroke="#ddd" /></svg></PenBtn>
        <PenBtn><svg width="18" height="18" viewBox="0 0 18 18"><circle cx="6" cy="6" r="4" fill="#ddd" /><circle cx="13" cy="7" r="3.500" fill="#ddd" /><circle cx="9" cy="13" r="4.500" fill="#eee" stroke="#222" /></svg></PenBtn>
        <PenBtn><svg width="18" height="18" viewBox="0 0 18 18"><text x="9" y="15" textAnchor="middle" fontFamily="Liberation Serif, serif" fontSize="18" fill="#ddd">T</text></svg></PenBtn>
        <PenBtn><svg width="18" height="18" viewBox="0 0 18 18"><path d="M2 11l8-8 5 5-7 7H6z" fill="#ccc" /><path d="M3 17h13" stroke="#ddd" /></svg></PenBtn>
        <PenRule />
        <PenBtn $mt={6}><Swatch /></PenBtn>
        <PenBtn $mt={3}><PenLine /></PenBtn>
        <PenFoot><PenFootBtn><svg width="20" height="8"><path d="M0 4l4-4v8zM20 4l-4-4v8zM4 4h2M14 4h2" fill="#ddd" stroke="#ddd" /></svg></PenFootBtn></PenFoot>
      </PenBar>

      <Dialog>
        <DlgHead>
          <svg width="15" height="15" viewBox="0 0 15 15"><circle cx="7.500" cy="7.500" r="3.500" fill="none" stroke="#fff" strokeWidth="1.500" /><circle cx="7.500" cy="7.500" r="5.500" fill="none" stroke="#fff" strokeWidth="2" strokeDasharray="2 2.300" /></svg>
          <DlgTitle>制图首选项</DlgTitle>
          <svg width="14" height="14" viewBox="0 0 14 14"><path d="M11 4a5 5 0 1 1-4-1.500M4.500 0.500l3 2-2 2.500" fill="none" stroke="#fff" strokeWidth="1.600" /></svg>
          <svg width="14" height="14" viewBox="0 0 14 14"><path d="M2 2l10 10M12 2L2 12" stroke="#fff" strokeWidth="2" /></svg>
        </DlgHead>
        <SearchRow>
          <svg width="24" height="22" viewBox="0 0 24 22"><path d="M5 2h5v18H1v-5zM14 2h5l4 13v5h-9zM10 8h4M1 15h9M14 15h9" fill="none" stroke="#333" /></svg>
          <SearchLbl>查找</SearchLbl>
          <SearchInput />
        </SearchRow>
        <DlgBody>
          <TreePane>
            <TreeList>
              {dlgRows.map((r, i) => (
                <TreeRow key={i} $odd={i % 2 === 1} $x={r.x}>
                  {r.exp && <TreeExp>{r.exp}</TreeExp>}
                  <TreeLabel $sel={r.sel}>{r.t}</TreeLabel>
                </TreeRow>
              ))}
            </TreeList>
            <VScroll>
              <VThumb $top={168} $h={113} $c="#c8c8c8" />
              <VArrow $top={7}><TinyUp /></VArrow>
              <VArrow $top={444}><TinyDown /></VArrow>
            </VScroll>
            <Guides width="160" height="456">
              <path d="M10 0V446M29 0V110M29 140V290M29 320V330M29 420V445M48 0V70" fill="none" stroke="#aaa" strokeDasharray="1 1.500" />
              <path d="M48 10h8M48 30h8M48 50h8M48 70h8M29 90h8M29 110h8M29 150h8M29 170h8M29 190h8M29 210h8M29 230h8M29 250h8M29 270h8M29 290h8M29 330h8M29 430h8" fill="none" stroke="#aaa" strokeDasharray="1 1.500" />
            </Guides>
          </TreePane>
          <OptPane>
            <OptCol>
              <Sec $h={106}>
                <SecHead $h={25}>边界<ChevUp /></SecHead>
                <Row $mt={4}><RowLeft><Check><svg width="11" height="11"><path d="M2 6l3 3 4-7" fill="none" stroke="#333" /></svg></Check>显示</RowLeft></Row>
                <Row $mt={3}>颜色<Color $c="#808080" $b="#6c6c6c" /></Row>
                <Row $mt={3}>颜色 - 活动草图视图<Color $c="#0000ff" $b="#333" /></Row>
              </Sec>
              <Sec $h={108}>
                <SecHead $h={30}>预览<ChevUp /></SecHead>
                <Row $h={32} $mt={8}>样式
                  <Styles>
                    <StyleCell $w={40}><Icon3 k="rect" /></StyleCell>
                    <StyleCell $w={32}><Icon3 k="wire" /></StyleCell>
                    <StyleCell $w={36}><Icon3 k="hid" /></StyleCell>
                    <StyleCell $w={33} $on><Icon3 k="shade" /></StyleCell>
                    <StyleDrop><Caret $c="#333" /></StyleDrop>
                  </Styles>
                </Row>
                <Row $mt={6}><RowLeft><Check />光标跟踪</RowLeft></Row>
              </Sec>
              <Sec $h={117}>
                <SecHead $h={28}>常规<ChevUp /></SecHead>
                <Row $mt={3}><RowLeft><Check><svg width="11" height="11"><path d="M2 6l3 3 4-7" fill="none" stroke="#333" /></svg></Check>关联对齐</RowLeft></Row>
                <Row $h={24} $mt={3}>显示已抽取边的面<Select>显示和强调<Caret /></Select></Row>
                <Row $h={24} $mt={3}>选择投影为圆弧的样条<Select>对自动功能从不<Caret /></Select></Row>
              </Sec>
              <Sec $h={125}>
                <SecHead $h={28}>智能轻量级视图<ChevUp /></SecHead>
                <GroupBox>
                  <Legend>处理无智能轻量级数据的体</Legend>
                  <RadioRow><Radio />忽略视图中的体</RadioRow>
                  <RadioRow><Radio />停止更新并发出通知</RadioRow>
                  <RadioRow><Radio />停止更新</RadioRow>
                </GroupBox>
              </Sec>
            </OptCol>
            <VScroll>
              <VThumb $top={17} $h={279} $c="#a8a8a8" />
              <VArrow $top={6}><TinyUp /></VArrow>
              <VArrow $top={444}><TinyDown /></VArrow>
            </VScroll>
          </OptPane>
        </DlgBody>
        <DlgFoot>
          <DlgBtn $p>确定</DlgBtn>
          <DlgBtn>应用</DlgBtn>
          <DlgBtn>取消</DlgBtn>
        </DlgFoot>
        <RedLine />
      </Dialog>

      <Sogou>
        <SogouS>S</SogouS>
        <SogouBar>
          <span>中</span>
          <svg width="15" height="15" viewBox="0 0 15 15"><path d="M10 1a7 7 0 1 1-9 9c4 1 9-3 9-9z" fill="#1673c1" /></svg>
          <svg width="14" height="15" viewBox="0 0 14 15"><circle cx="3" cy="4" r="2" fill="none" stroke="#1673c1" strokeWidth="1.300" /><path d="M10 6c2 1 2 4-1 6" fill="none" stroke="#1673c1" strokeWidth="2" /></svg>
          <svg width="16" height="12" viewBox="0 0 16 12"><rect x=".5" y=".5" width="15" height="11" rx="1.500" fill="none" stroke="#1673c1" /><path d="M3 4h10M3 6.500h10M5 9h6" stroke="#1673c1" strokeDasharray="1.500 1" /></svg>
          <svg width="16" height="15" viewBox="0 0 16 15"><circle cx="7" cy="4" r="3" fill="#b9c4cc" /><path d="M1 14c0-4 3-6 6-6s6 2 6 6z" fill="#b9c4cc" /><rect x="8" y="9" width="8" height="6" fill="#fff" stroke="#b9c4cc" /></svg>
          <svg width="15" height="14" viewBox="0 0 15 14"><path d="M4 1l3 1 3-1 5 3-2 3-1-1v8H3V6L2 7 0 4z" fill="#1673c1" /></svg>
          <svg width="15" height="15" viewBox="0 0 15 15"><path d="M1 14l6-7c-1-3 1-6 5-6l-2 3 2 2 3-2c0 4-3 6-6 5l-6 6z" fill="#1673c1" /></svg>
        </SogouBar>
      </Sogou>
    </Frame>
  );
}
